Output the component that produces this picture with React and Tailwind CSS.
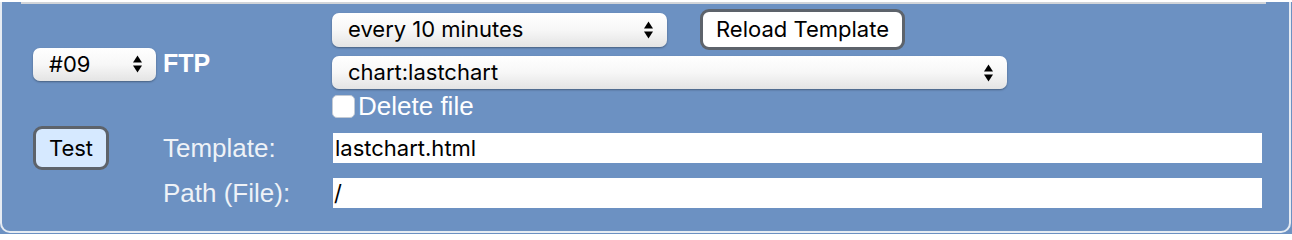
import React from "react";

const Arrows = () => (
  <svg
    className="pointer-events-none absolute right-[14px] top-1/2 -translate-y-1/2"
    width="9"
    height="18"
    viewBox="0 0 9 18"
  >
    <path d="M4.5 0.5 L9 7.5 L0 7.5 Z" fill="#000" />
    <path d="M0 10.5 L9 10.5 L4.5 17.5 Z" fill="#000" />
  </svg>
);

const FakeSelect = ({ value, options, className }) => (
  <div className={`relative ${className}`}>
    <select
      defaultValue={value}
      className="h-full w-full appearance-none rounded-[7px] bg-gradient-to-b from-white via-[#f7f7f7] to-[#e4e4e4] pl-[16px] pr-[30px] text-[22px] text-black shadow-[0_1px_2px_rgba(0,0,0,0.35)] outline-none"
    >
      {options.map((o) => (
        <option key={o}>{o}</option>
      ))}
    </select>
    <Arrows />
  </div>
);

const App = () => {
  return (
    <div className="h-[232px] w-[1292px] bg-[#6c91c2] font-['Inter',sans-serif]">
      <div className="h-[231px] w-[1291px] rounded-b-[10px] border-2 border-t-0 border-[#e6ecf3]">
        <div className="ml-[19px] mt-[2px] h-[2px] w-[1245px] bg-[#d2d5d9]" />

        <div className="mt-[5px] flex items-center pl-[31px]">
          <div className="flex w-[299px] items-center pt-[1px]">
            <FakeSelect
              value="#09"
              options={["#01", "#02", "#03", "#04", "#05", "#06", "#07", "#08", "#09", "#10"]}
              className="h-[33px] w-[123px]"
            />
            <span className="ml-[7px] font-['Liberation_Sans',sans-serif] text-[25px] font-bold text-white">
              FTP
            </span>
          </div>

          <div className="flex flex-col">
            <div className="flex items-center">
              <FakeSelect
                value="every 10 minutes"
                options={["every 5 minutes", "every 10 minutes", "every 30 minutes", "every hour"]}
                className="h-[34px] w-[335px]"
              />
              <button className="ml-[33px] h-[41px] w-[205px] rounded-[9px] border-[3px] border-[#5d636b] bg-white text-[22px] text-black">
                Reload Template
              </button>
            </div>
            <FakeSelect
              value="chart:lastchart"
              options={["chart:lastchart", "chart:daychart", "chart:weekchart"]}
              className="mt-[6px] h-[33px] w-[675px]"
            />
            <label className="mt-[5px] flex h-[24px] items-center">
              <input
                type="checkbox"
                className="h-[23px] w-[23px] appearance-none rounded-[5px] border border-[#c3cad4] bg-white"
              />
              <span className="ml-[3px] font-['Liberation_Sans',sans-serif] text-[26px] leading-none text-white">
                Delete file
              </span>
            </label>
          </div>
        </div>

        <div className="mt-[8px] grid grid-cols-[130px_170px_929px] items-center gap-y-[8px] pl-[31px]">
          <button className="h-[44px] w-[76px] rounded-[9px] border-[3px] border-[#5d636b] bg-[#d6e9ff] text-[22px] text-black">
            Test
          </button>
          <span className="font-['Liberation_Sans',sans-serif] text-[26px] leading-none text-[#eef2f7]">
            Template:
          </span>
          <input
            defaultValue="lastchart.html"
            className="h-[30px] w-[929px] bg-white pl-[2px] text-[22px] text-black outline-none"
          />

          <span />
          <span className="font-['Liberation_Sans',sans-serif] text-[26px] leading-none text-[#eef2f7]">
            Path (File):
          </span>
          <input
            defaultValue="/"
            className="h-[30px] w-[929px] bg-white pl-[1px] text-[22px] text-black outline-none"
          />
        </div>
      </div>
    </div>
  );
};

export default App;
